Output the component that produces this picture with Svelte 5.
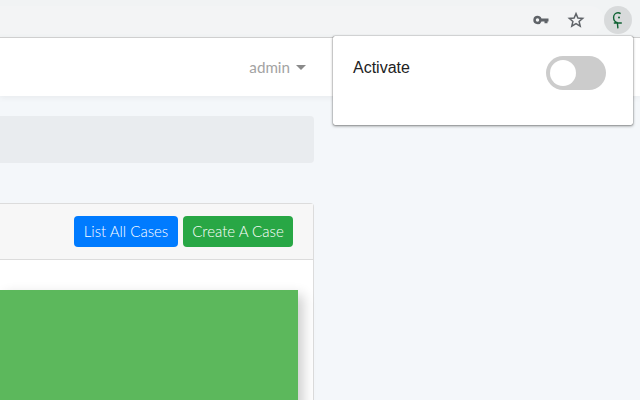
<script>
  // Browser chrome with the extension popup open over an admin page
  let active = $state(false);
</script>

<div class="window">
  <header class="toolbar">
    <div class="omnibox">
      <svg class="key" width="16" height="16" viewBox="0 0 16 16" aria-hidden="true">
        <path fill="#5f6368" fill-rule="evenodd" d="M4.5 3.8a4.2 4.2 0 0 1 4 2.8h7v2.8h-1v1.8h-3V9.4H8.5a4.2 4.2 0 1 1-4-5.6zm0 2.5a1.7 1.7 0 1 0 0 3.4 1.7 1.7 0 0 0 0-3.4z" />
      </svg>
      <svg class="star" width="18" height="18" viewBox="0 0 18 18" aria-hidden="true">
        <path fill="none" stroke="#5f6368" stroke-width="1.5" stroke-linejoin="miter" d="M9 2.6l1.9 4.4 4.8.4-3.6 3.1 1.1 4.7L9 12.7l-4.2 2.5 1.1-4.7-3.6-3.1 4.8-.4z" />
      </svg>
    </div>
    <button class="ext" aria-label="Extension">
      <svg width="14" height="20" viewBox="0 0 14 20" aria-hidden="true">
        <path fill="none" stroke="#0f6233" stroke-width="1.4" d="M9.6 3.6C8.8 3 8 2.8 7 2.8 4.4 2.8 2.6 4.8 2.6 7.4c0 2.6 1.6 4.6 4 5.2M2.8 13h8M6.4 12.8l.5 5.6" />
        <circle cx="8" cy="7.6" r="1" fill="#0f6233" />
      </svg>
    </button>
  </header>

  <nav class="navbar">
    <span class="user">admin<i class="caret"></i></span>
  </nav>

  <main class="content">
    <div class="breadcrumb"></div>
    <section class="card">
      <div class="card-header">
        <a class="btn blue" href="#list">List All Cases</a>
        <a class="btn green" href="#create">Create A Case</a>
      </div>
      <div class="card-body">
        <div class="panel"></div>
      </div>
    </section>
  </main>

  <aside class="popup">
    <span class="label">Activate</span>
    <button class="switch" class:on={active} aria-label="Activate" onclick={() => (active = !active)}>
      <span class="knob"></span>
    </button>
  </aside>
</div>

<style>
  :global(body) {
    margin: 0;
    background: #f4f7fa;
  }

  .window {
    position: relative;
    width: 640px;
    height: 400px;
    overflow: hidden;
    background: #f4f7fa;
    font-family: Lato, "Open Sans", sans-serif;
  }

  .toolbar {
    display: flex;
    align-items: center;
    height: 37px;
    box-sizing: border-box;
    background: #f1f3f4;
    padding-right: 8px;
  }

  .omnibox {
    flex: 1;
    display: flex;
    align-items: center;
    justify-content: flex-end;
    gap: 18px;
    height: 28px;
    margin-top: 2px;
    padding-right: 19px;
    background: #f3f4f5;
    border-radius: 0 14px 14px 0;
  }

  .ext {
    display: flex;
    align-items: center;
    justify-content: center;
    width: 28px;
    height: 28px;
    margin-top: 2px;
    padding: 0;
    border: 0;
    border-radius: 50%;
    background: #d8dadb;
  }

  .navbar {
    display: flex;
    align-items: center;
    justify-content: flex-end;
    height: 59px;
    box-sizing: border-box;
    border-top: 1px solid #cfcfcf;
    background: #fff;
    box-shadow: 0 2px 6px rgba(0, 0, 0, 0.05);
    padding-right: 334px;
  }

  .user {
    display: flex;
    align-items: center;
    color: #a3a3a3;
    font-size: 15.2px;
  }

  .caret {
    width: 0;
    height: 0;
    margin-left: 6px;
    border-top: 5px solid #8a8a8a;
    border-left: 5px solid transparent;
    border-right: 5px solid transparent;
  }

  .content {
    width: 314px;
    padding-top: 20px;
  }

  .breadcrumb {
    height: 47px;
    margin-bottom: 40px;
    border-radius: 0 4px 4px 0;
    background: #e9ecef;
  }

  .card {
    border: 1px solid #dcdcdc;
    border-left: 0;
    border-radius: 0 4px 0 0;
    background: #fff;
  }

  .card-header {
    display: flex;
    justify-content: flex-end;
    gap: 5px;
    height: 56px;
    box-sizing: border-box;
    padding: 12px 20px 0 0;
    border-bottom: 1px solid #dcdcdc;
    background: #f7f7f7;
  }

  .btn {
    display: flex;
    align-items: center;
    justify-content: center;
    height: 31px;
    box-sizing: border-box;
    padding-bottom: 2px;
    border-radius: 4px;
    color: #fff;
    font-size: 15px;
    font-weight: 300;
    text-decoration: none;
  }

  .blue {
    width: 104px;
    background: #007bff;
  }

  .green {
    width: 110px;
    background: #28a745;
  }

  .card-body {
    height: 140px;
    padding: 30px 15px 0 0;
  }

  .panel {
    height: 140px;
    background: #5cb85c;
    box-shadow: 5px 5px 12px rgba(0, 0, 0, 0.2);
  }

  .popup {
    position: absolute;
    top: 36px;
    left: 333px;
    display: flex;
    justify-content: space-between;
    width: 300px;
    height: 89px;
    box-sizing: border-box;
    padding: 20px 27px 0 20px;
    border-radius: 2px;
    background: #fff;
    box-shadow: 0 0 1px rgba(0, 0, 0, 0.7), 0 1px 3px rgba(0, 0, 0, 0.45);
  }

  .label {
    color: #222;
    font-family: "Liberation Sans", Arial, sans-serif;
    font-size: 16px;
    line-height: 23px;
  }

  .switch {
    position: relative;
    width: 60px;
    height: 34px;
    padding: 0;
    border: 0;
    border-radius: 17px;
    background: #ccc;
  }

  .knob {
    position: absolute;
    top: 4px;
    left: 4px;
    width: 26px;
    height: 26px;
    border-radius: 50%;
    background: #fff;
  }

  .switch.on {
    background: #28a745;
  }

  .switch.on .knob {
    left: 30px;
  }
</style>
